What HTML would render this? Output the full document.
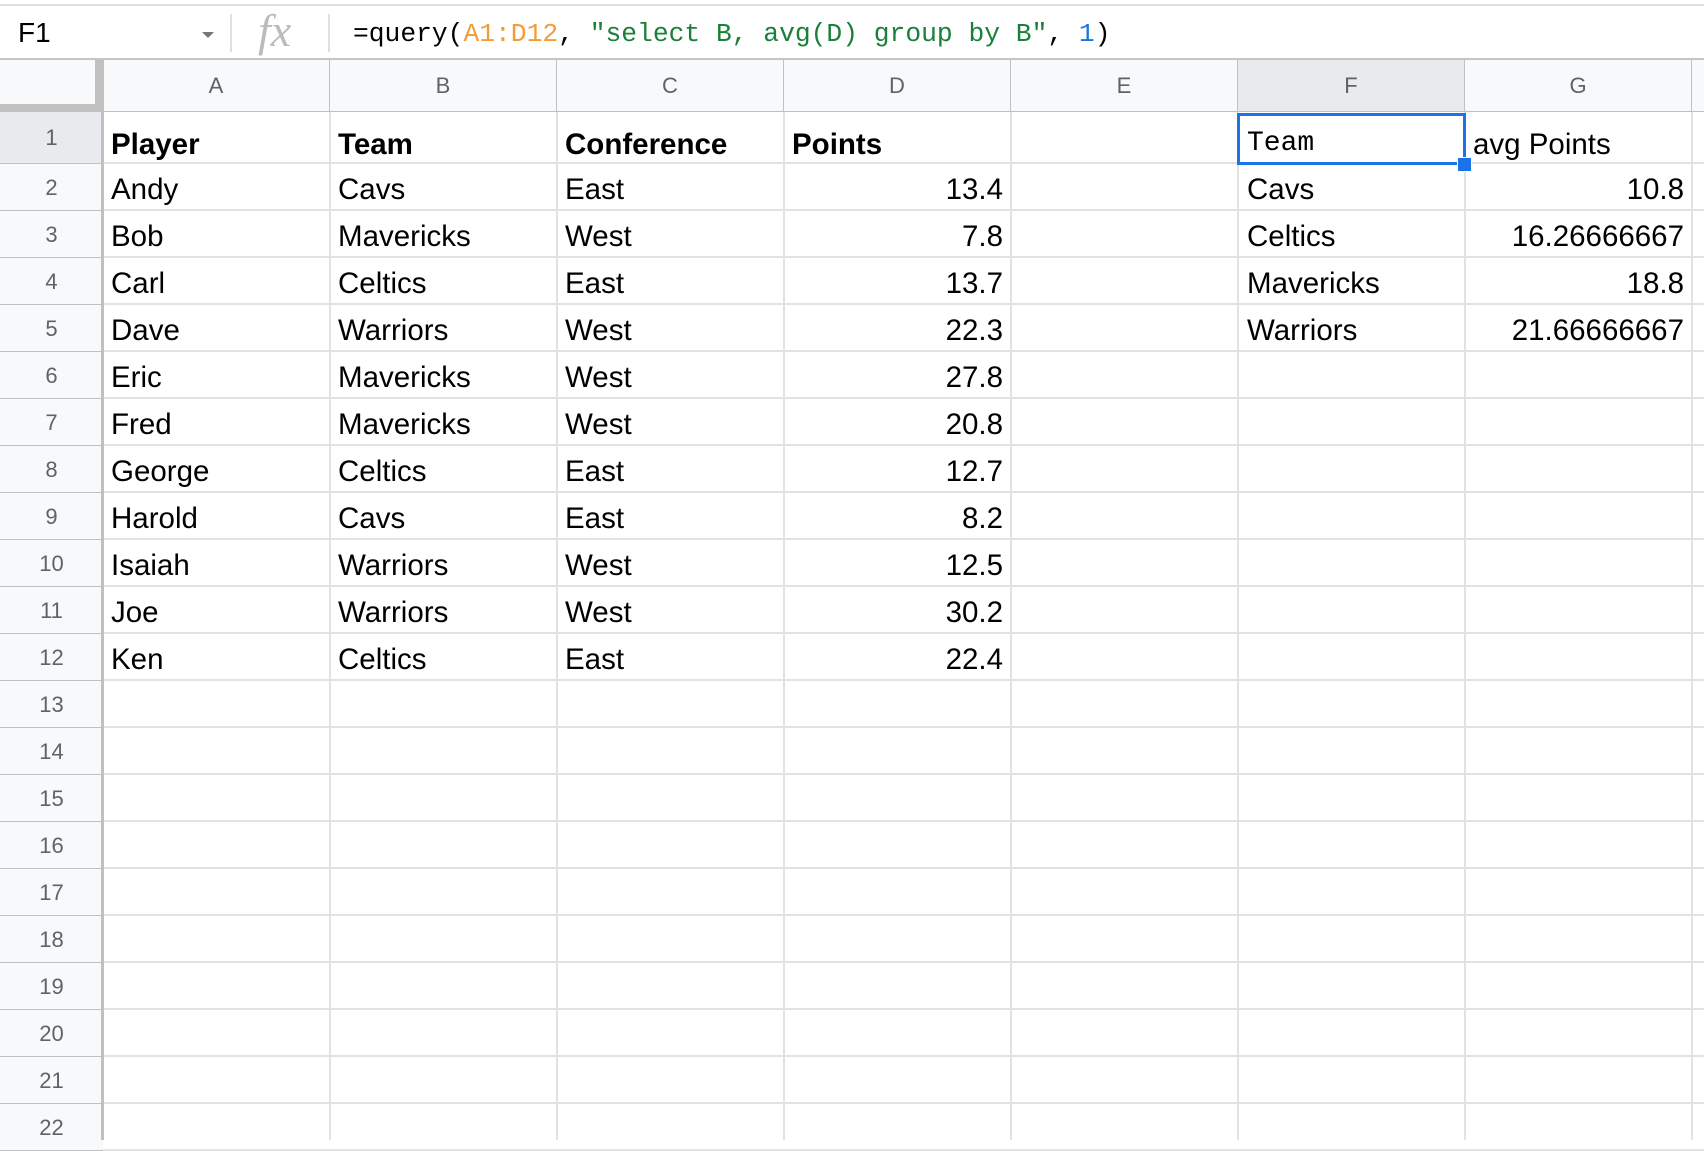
<!DOCTYPE html>
<html><head><style>
body{margin:0;width:1704px;height:1140px;overflow:hidden;background:#fff;font-family:"Liberation Sans",Arial,sans-serif;position:relative}
.a{position:absolute}
.fb{left:0;width:1704px;border-top:2px solid #e0e0e0;border-bottom:2px solid #c4c7c5;box-sizing:border-box;top:4px;height:56px}
.cell{position:absolute;font-size:29.5px;color:#000;white-space:nowrap;line-height:47px}
.ch{position:absolute;top:60px;height:52px;line-height:52px;text-align:center;font-size:22px;color:#5f6368;background:#f8f9fa;border-right:1px solid #c0c0c0;box-sizing:border-box}
.rh{position:absolute;left:0;width:103px;text-align:center;font-size:22px;color:#5f6368;background:#f8f9fa;border-bottom:1px solid #c0c0c0;box-sizing:border-box}
</style></head><body>
<div class="a fb"></div>
<div class="a" style="left:18px;top:15px;font-size:28px;line-height:36px">F1</div>
<div class="a" style="left:202px;top:32px;width:0;height:0;border-left:6px solid transparent;border-right:6px solid transparent;border-top:6px solid #777"></div>
<div class="a" style="left:230px;top:14px;width:2px;height:38px;background:#e0e0e0"></div>
<div class="a" style="left:258px;top:4px;font-family:'Liberation Serif',serif;font-style:italic;font-size:46px;color:#bbb">fx</div>
<div class="a" style="left:328px;top:14px;width:2px;height:38px;background:#e0e0e0"></div>
<div class="a" style="left:353px;top:16px;font-family:'Liberation Mono',monospace;font-size:26.3px;line-height:36px;white-space:pre">=query(<span style="color:#f29b38">A1:D12</span>, <span style="color:#188038">"select B, avg(D) group by B"</span>, <span style="color:#1a73e8">1</span>)</div>
<div id="g"></div>
<script>
(function(){
var h='';
var cols=['A','B','C','D','E','F','G'];
for(var i=0;i<7;i++){var x=103+227*i;h+='<div class="ch" style="left:'+x+'px;width:227px;'+(i==5?'background:#e8eaed;':'')+'">'+cols[i]+'</div>';}
h+='<div class="ch" style="left:1692px;width:20px"></div>';
h+='<div class="a" style="left:0;top:60px;width:103px;height:52px;background:#f8f9fa;box-sizing:border-box;border-right:8px solid #c0c0c0;border-bottom:8px solid #c0c0c0"></div>';
h+='<div class="a" style="left:0;top:111px;width:1704px;height:1px;background:#c0c0c0"></div>';
function rt(r){return r==1?112:164+(r-2)*47}
for(var r=1;r<=22;r++){var t=rt(r),hh=r==1?52:47;
h+='<div class="rh" style="top:'+t+'px;height:'+hh+'px;line-height:'+hh+'px;'+(r==1?'background:#e8eaed;':'')+'">'+r+'</div>';
h+='<div class="a" style="left:103px;top:'+(t+hh-2)+'px;width:1601px;height:2px;background:#e2e2e2"></div>';}
for(var i=0;i<=7;i++){h+='<div class="a" style="left:'+(102+227*i)+'px;top:112px;width:2px;height:1028px;background:#e2e2e2"></div>';}
h+='<div class="a" style="left:101px;top:60px;width:3px;height:1080px;background:#c0c0c0"></div>';
var d=[["Player","Team","Conference","Points"],["Andy","Cavs","East","13.4"],["Bob","Mavericks","West","7.8"],["Carl","Celtics","East","13.7"],["Dave","Warriors","West","22.3"],["Eric","Mavericks","West","27.8"],["Fred","Mavericks","West","20.8"],["George","Celtics","East","12.7"],["Harold","Cavs","East","8.2"],["Isaiah","Warriors","West","12.5"],["Joe","Warriors","West","30.2"],["Ken","Celtics","East","22.4"]];
for(var r=0;r<d.length;r++){var t=rt(r+1)+(r==0?9:2);
for(var c=0;c<4;c++){var x=103+227*c;var st=r==0?'font-weight:bold;':'';
if(c==3&&r>0)h+='<div class="cell" style="left:'+x+'px;width:219px;text-align:right;top:'+t+'px">'+d[r][c]+'</div>';
else h+='<div class="cell" style="left:'+(x+8)+'px;top:'+t+'px;'+st+'">'+d[r][c]+'</div>';}}
var q=[["Cavs","10.8"],["Celtics","16.26666667"],["Mavericks","18.8"],["Warriors","21.66666667"]];
h+='<div class="cell" style="left:1247px;top:120px;font-family:Liberation Mono,monospace;font-size:28px">Team</div>';
h+='<div class="cell" style="left:1473px;top:121px">avg Points</div>';
for(var r=0;r<4;r++){var t=rt(r+2)+2;h+='<div class="cell" style="left:1247px;top:'+t+'px">'+q[r][0]+'</div><div class="cell" style="left:1465px;width:219px;text-align:right;top:'+t+'px">'+q[r][1]+'</div>';}
h+='<div class="a" style="left:1237px;top:113px;width:229px;height:52px;border:3px solid #1a73e8;box-sizing:border-box"></div>';
h+='<div class="a" style="left:1457px;top:157px;width:13px;height:13px;background:#1a73e8;border:1px solid #fff"></div>';
document.getElementById('g').innerHTML=h;
})();
</script>
</body></html>
